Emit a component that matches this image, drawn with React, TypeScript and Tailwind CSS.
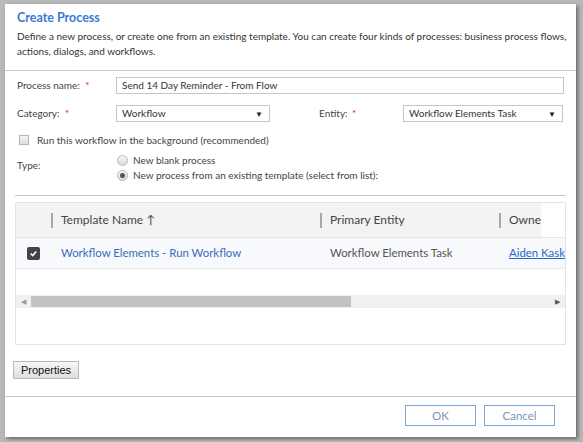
import React from 'react';

const font = { fontFamily: 'Lato, "Open Sans", sans-serif' };

function Dropdown({ value, width }: { value: string; width: string }) {
  return (
    <div className={`${width} h-[17px] border border-[#c6c6c6] bg-white flex items-center justify-between pl-[5px] pr-[6px] text-[10px] text-[#333]`}>
      <span>{value}</span>
      <span className="text-[8px] text-[#222]">▼</span>
    </div>
  );
}

function Radio({ checked }: { checked?: boolean }) {
  return (
    <span className="w-[11px] h-[11px] rounded-full border border-[#b9b9b9] bg-gradient-to-b from-[#f4f4f4] to-[#dcdcdc] flex items-center justify-center">
      {checked && <span className="w-[5px] h-[5px] rounded-full bg-[#555]" />}
    </span>
  );
}

function HeaderSep() {
  return <span className="w-[2px] h-[15px] bg-[#a8a8a8] shrink-0" />;
}

export default function App() {
  return (
    <div className="w-[583px] h-[442px] bg-[#b9b9b9] overflow-hidden" style={font}>
      <div className="ml-[5px] mt-[4px] w-[571px] h-[433px] bg-white flex flex-col shadow-[2px_2px_4px_rgba(0,0,0,0.45)]">
        {/* header */}
        <div className="h-[67px] shrink-0 px-[12px] pt-[6px] border-b border-[#c8c8c8]">
          <div className="text-[12.5px] font-bold text-[#3b78d4] leading-[16px]">Create Process</div>
          <p className="mt-[3px] text-[10px] leading-[15px] text-[#333] whitespace-nowrap">
            Define a new process, or create one from an existing template. You can create four kinds of processes: business process flows,
            <br />
            actions, dialogs, and workflows.
          </p>
        </div>

        {/* form */}
        <div className="px-[12px] pt-[6px] text-[10px] text-[#444]">
          <div className="flex items-center h-[17px]">
            <span className="w-[99px]">
              Process name: <span className="text-[#d21f1f] ml-[3px]">*</span>
            </span>
            <div className="w-[448px] h-[17px] border border-[#c6c6c6] flex items-center pl-[5px] text-[#333]">
              Send 14 Day Reminder - From Flow
            </div>
          </div>

          <div className="flex items-center h-[17px] mt-[11px]">
            <span className="w-[99px]">
              Category: <span className="text-[#d21f1f] ml-[3px]">*</span>
            </span>
            <Dropdown value="Workflow" width="w-[154px]" />
            <span className="ml-[49px] w-[84px]">
              Entity: <span className="text-[#d21f1f] ml-[2px]">*</span>
            </span>
            <Dropdown value="Workflow Elements Task" width="w-[160px]" />
          </div>

          <div className="flex items-center mt-[11px] h-[14px]">
            <span className="ml-[2px] w-[10px] h-[10px] border border-[#b5b5b5] bg-gradient-to-b from-[#f4f4f4] to-[#dedede]" />
            <span className="ml-[8px]">Run this workflow in the background (recommended)</span>
          </div>

          <div className="flex mt-[6px] h-[30px]">
            <span className="w-[100px] pt-[5px]">Type:</span>
            <div className="flex flex-col">
              <div className="flex items-center h-[15px] gap-[5px]">
                <Radio />
                <span>New blank process</span>
              </div>
              <div className="flex items-center h-[15px] gap-[5px]">
                <Radio checked />
                <span>New process from an existing template (select from list):</span>
              </div>
            </div>
          </div>
        </div>

        <div className="mx-[10px] mt-[12px] border-t border-[#c8c8c8]" />

        {/* grid */}
        <div className="mx-[10px] mt-[6px] h-[143px] shrink-0 border border-[#e3e3e3] flex flex-col">
          <div className="h-[35px] flex text-[12px] text-[#444] border-b border-[#e6e6e6] shrink-0">
            <div className="w-[525px] bg-[#f3f3f3] flex items-center overflow-hidden whitespace-nowrap">
              <span className="w-[35px] shrink-0" />
              <HeaderSep />
              <span className="ml-[8px] w-[259px] shrink-0">Template Name ↑</span>
              <HeaderSep />
              <span className="ml-[8px] w-[169px] shrink-0">Primary Entity</span>
              <HeaderSep />
              <span className="ml-[8px]">Owner</span>
            </div>
            <div className="flex-1 bg-white" />
          </div>

          <div className="h-[31px] shrink-0 bg-[#f7f9fc] border-b border-[#eaeaea] flex items-center text-[11.4px] whitespace-nowrap overflow-hidden">
            <span className="ml-[11px] w-[13px] h-[13px] rounded-[2px] bg-[#444] flex items-center justify-center shrink-0">
              <svg width="9" height="9" viewBox="0 0 10 10">
                <path d="M2 5.2 L4.2 7.3 L8 2.8" stroke="#fff" strokeWidth="1.8" fill="none" />
              </svg>
            </span>
            <span className="ml-[21px] w-[269px] shrink-0 text-[#3a6cb8]">Workflow Elements - Run Workflow</span>
            <span className="w-[179px] shrink-0 text-[#555]">Workflow Elements Task</span>
            <span className="text-[#2a66c4] underline">Aiden Kaskela</span>
          </div>

          <div className="h-[26px] shrink-0" />

          <div className="h-[13px] shrink-0 bg-[#f0f0f0] flex items-center">
            <span className="ml-[5px] text-[7px] text-[#999] w-[10px]">◀</span>
            <span className="h-[11px] w-[320px] bg-[#c2c2c2]" />
            <span className="ml-auto mr-[5px] text-[7px] text-[#555]">▶</span>
          </div>
        </div>

        {/* properties */}
        <div className="flex px-[8px] mt-[16px]">
          <button
            className="w-[66px] h-[18px] border border-[#b8b8b8] bg-gradient-to-b from-[#f7f7f7] to-[#dedede] text-[11px] leading-[16px] text-[#111]"
            style={{ fontFamily: '"Liberation Sans", Arial, sans-serif' }}
          >
            Properties
          </button>
        </div>

        {/* footer */}
        <div className="mt-auto h-[41px] border-t border-[#c8c8c8] flex items-start justify-end gap-[8px] pr-[21px] pt-[8px]">
          <button className="w-[71px] h-[21px] border border-[#74a7e6] bg-white text-[11.5px] text-[#7b94b8]">OK</button>
          <button className="w-[71px] h-[21px] border border-[#74a7e6] bg-white text-[11.5px] text-[#7b94b8]">Cancel</button>
        </div>
      </div>
    </div>
  );
}
